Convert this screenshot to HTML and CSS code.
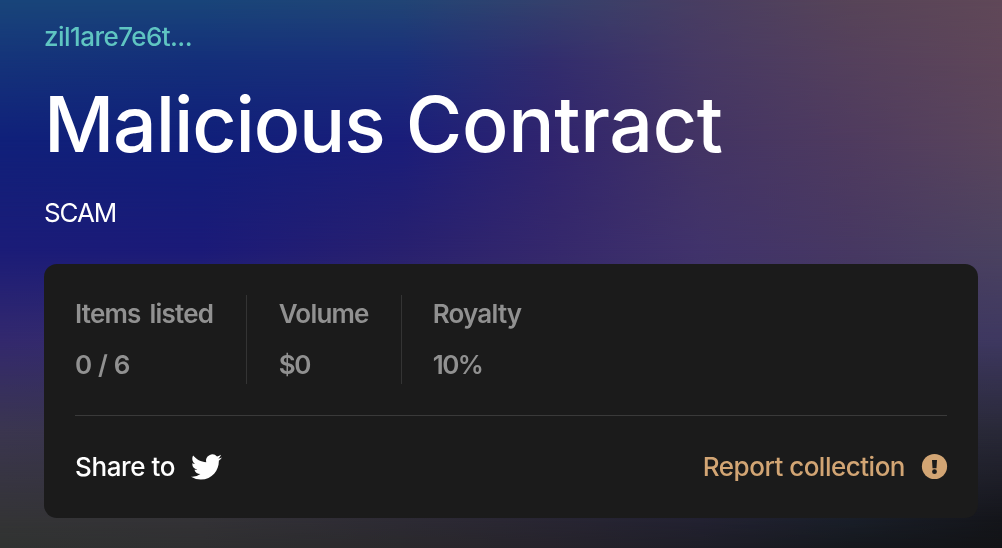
FILE: index.html
```html
<!DOCTYPE html>
<html lang="en">
<head>
<meta charset="utf-8">
<title>Malicious Contract</title>
<link rel="stylesheet" href="styles.css">
</head>
<body>
<div class="backdrop" aria-hidden="true">
  <div class="band band-1"></div>
  <div class="band band-2"></div>
  <div class="band band-3"></div>
  <div class="band band-4"></div>
  <div class="band band-5"></div>
  <div class="band band-6"></div>
  <div class="band band-7"></div>
  <div class="band band-8"></div>
</div>
<main class="collection">
  <a class="address">zil1are7e6t...</a>
  <h1 class="title"><span class="tight">Malicious</span> Contract</h1>
  <p class="description">SCAM</p>
  <section class="card">
    <dl class="stats">
      <div class="stat"><dt>Items listed</dt><dd>0 / 6</dd></div>
      <div class="stat"><dt>Volume</dt><dd>$0</dd></div>
      <div class="stat"><dt>Royalty</dt><dd>10%</dd></div>
    </dl>
    <div class="actions">
      <a class="share"><span>Share to</span>
        <svg class="bird" viewBox="0 0.4 24 24" fill="currentColor"><path d="M23.953 4.57a10 10 0 01-2.825.775 4.958 4.958 0 002.163-2.723c-.951.555-2.005.959-3.127 1.184a4.92 4.92 0 00-8.384 4.482C7.69 8.095 4.067 6.13 1.64 3.162a4.822 4.822 0 00-.666 2.475c0 1.71.87 3.213 2.188 4.096a4.904 4.904 0 01-2.228-.616v.06a4.923 4.923 0 003.946 4.827 4.996 4.996 0 01-2.212.085 4.936 4.936 0 004.604 3.417 9.867 9.867 0 01-6.102 2.105c-.39 0-.779-.023-1.17-.067a13.995 13.995 0 007.557 2.209c9.053 0 13.998-7.496 13.998-13.985 0-.21 0-.42-.015-.63A9.935 9.935 0 0024 4.59z"/></svg>
      </a>
      <a class="report"><span>Report collection</span>
        <svg class="alert" viewBox="0 0 26 26"><circle cx="13.5" cy="12.5" r="12.6" fill="currentColor"/><path d="M11 6h5l-.5 8.2h-4z" fill="#1b1b1b"/><circle cx="13.5" cy="17.7" r="2.4" fill="#1b1b1b"/></svg>
      </a>
    </div>
  </section>
</main>
</body>
</html>
```
FILE: styles.css
```css
* { box-sizing: border-box; margin: 0; }

body {
  height: 548px;
  overflow: hidden;
  background: #1b1c78;
  color: #fff;
  font: 400 26px/32px Inter, "Liberation Sans", sans-serif;
  letter-spacing: -0.5px;
}

/* Mesh gradient: each band fades in over the one above it. */
.backdrop { position: fixed; inset: 0; z-index: -1; }
.band { position: absolute; inset: 0; }
.band-1 { background: linear-gradient(90deg, #19457a, #19457a 20%, #214575 40%, #35416c 55%, #493e62 70%, #574458 85%, #604858); }
.band-2 { background: linear-gradient(90deg, #15347a, #142f7a 20%, #1a2f7a 40%, #322d6e 55%, #473964 70%, #54405c 85%, #5e4659); mask: linear-gradient(transparent 0, #000 60px); }
.band-3 { background: linear-gradient(90deg, #10207a, #101f7a 20%, #1a1d7a 40%, #30246e 55%, #433464 70%, #4f3b5f 85%, #5a455c); mask: linear-gradient(transparent 60px, #000 140px); }
.band-4 { background: linear-gradient(90deg, #1b1c78, #1b1a78 20%, #28206f 40%, #35286c 55%, #41336b 70%, #473862 85%, #4b4260); mask: linear-gradient(transparent 140px, #000 250px); }
.band-5 { background: linear-gradient(90deg, #33296e, #3e3860); mask: linear-gradient(transparent 250px, #000 340px); }
.band-6 { background: linear-gradient(90deg, #3b3650, #292938); mask: linear-gradient(transparent 340px, #000 430px); }
.band-7 { background: linear-gradient(90deg, #343436, #333236 20%, #2a2733 50%, #222131 70%, #191e28 85%, #14151a); mask: linear-gradient(transparent 430px, #000 520px); }
.band-8 { background: linear-gradient(90deg, #303331, #2f2f30 20%, #2a292c 40%, #26232b 55%, #1e1e27 70%, #15181d 85%, #121316); mask: linear-gradient(transparent 520px, #000 548px); }

.collection { padding: 21px 24px 0 44px; }
.address { display: block; color: #5fc5c2; font-weight: 500; letter-spacing: -0.55px; }
.title { margin-top: 23px; font-size: 77px; line-height: 96px; font-weight: 500; letter-spacing: -0.3px; word-spacing: 1px; }
.tight { letter-spacing: -1.15px; }
.description { margin-top: 25px; letter-spacing: -1.1px; }

.card {
  height: 254px;
  margin-top: 35px;
  padding: 31px 31px 0;
  border-radius: 13px;
  background: #1b1b1b;
}
.stats { display: flex; height: 89px; color: #919191; font-weight: 600; letter-spacing: -0.8px; }
.stat { padding-right: 32px; }
.stat:first-child { padding-right: 32.6px; }
.stat + .stat { padding-left: 32px; border-left: 1px solid #343434; }
.stat:last-child { padding-left: 31px; }
.stats dt { margin-top: 3px; word-spacing: 3.2px; }
.stats dd { margin-top: 19px; word-spacing: 0.9px; }
.stat + .stat dd { letter-spacing: -1.5px; }
.actions {
  display: flex;
  justify-content: space-between;
  margin-top: 31px;
  padding-top: 35px;
  border-top: 1px solid #3a3a3a;
  font-weight: 500;
}
.share, .report { display: flex; align-items: center; gap: 16px; }
.share { letter-spacing: -0.4px; }
.report { color: #d2a574; }
.bird { width: 31px; height: 31px; }
.alert { width: 26px; height: 26px; overflow: visible; }
```
